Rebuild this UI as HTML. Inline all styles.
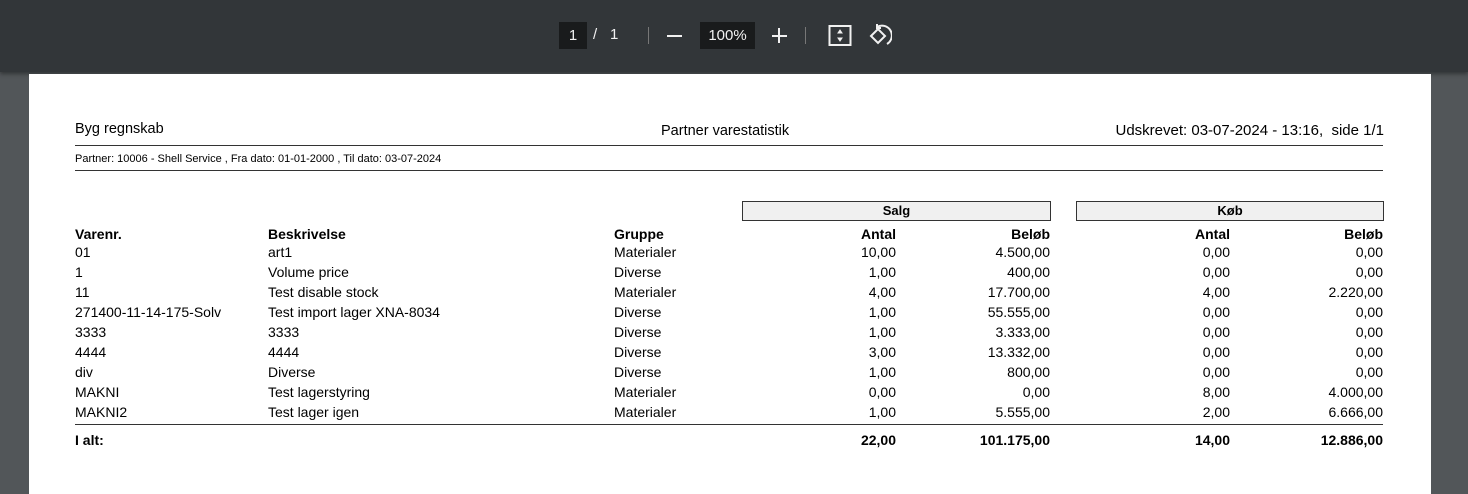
<!DOCTYPE html>
<html><head><meta charset="utf-8"><style>
*{margin:0;padding:0;box-sizing:border-box}
body{width:1468px;height:490px;overflow:hidden;background:#525659;font-family:"Liberation Sans",sans-serif;position:relative}
.tb{position:absolute;left:0;top:0;width:1468px;height:72px;background:#323639;box-shadow:0 2px 4px rgba(0,0,0,.4)}
.tb div,.tb span{position:absolute;color:#f1f1f1;font-size:15px}
.page{position:absolute;left:29px;top:74px;width:1402px;height:420px;background:#fff}
.t{position:absolute;font-size:14px;color:#000;white-space:nowrap;line-height:16px}
.r{text-align:right}
.b{font-weight:bold}
.ln{position:absolute;left:46px;width:1308px;height:1px;background:#333}
.box{position:absolute;top:127px;height:20px;border:1px solid #333;background:#f0f0f0;font-size:13px;font-weight:bold;text-align:center;line-height:18px}
</style></head><body>
<div class="tb">
<div style="left:559px;top:22px;width:28px;height:27px;background:#191b1c;text-align:center;line-height:27px">1</div>
<span style="left:593px;top:26px">/</span><span style="left:610px;top:26px">1</span>
<div style="left:648px;top:27px;width:1px;height:17px;background:#777"></div>
<div style="left:667px;top:35px;width:15px;height:2px;background:#f1f1f1"></div>
<div style="left:700px;top:22px;width:55px;height:27px;background:#191b1c;text-align:center;line-height:27px">100%</div>
<div style="left:772px;top:35px;width:15px;height:2px;background:#f1f1f1"></div>
<div style="left:778px;top:28px;width:2px;height:15px;background:#f1f1f1"></div>
<div style="left:805px;top:27px;width:1px;height:17px;background:#777"></div>
<svg style="position:absolute;left:828px;top:24px" width="24" height="24" viewBox="0 0 24 24" fill="none" stroke="#f1f1f1" stroke-width="2"><rect x="1.5" y="2" width="21" height="19"/><path d="M12 6l-2 3h4zM12 17l-2-3h4z" fill="#f1f1f1" stroke-width="1"/></svg>
<svg style="position:absolute;left:868px;top:23px" width="24" height="26" viewBox="0 0 24 26" fill="none" stroke="#f1f1f1" stroke-width="2"><path d="M3 13l7-7 7 7-7 7z"/><path d="M9 4a9 9 0 1 1 10 17"/><path d="M9 1v4h4"/></svg>
</div>
<div class="page">
<div class="t" style="left:46px;top:47px;font-size:14.5px">Byg regnskab</div>
<div class="t" style="left:632px;top:49px;font-size:14.5px">Partner varestatistik</div>
<div class="t r" style="right:47px;top:49px;font-size:15px">Udskrevet: 03-07-2024 - 13:16,&nbsp; side 1/1</div>
<div class="ln" style="top:71px"></div>
<div class="t" style="left:46px;top:77px;font-size:11px">Partner: 10006 - Shell Service , Fra dato: 01-01-2000 , Til dato: 03-07-2024</div>
<div class="ln" style="top:96px"></div>
<div class="box" style="left:713px;width:309px">Salg</div>
<div class="box" style="left:1047px;width:308px">Køb</div>
<div class="t b" style="left:46px;top:152px">Varenr.</div>
<div class="t b" style="left:239px;top:152px">Beskrivelse</div>
<div class="t b" style="left:585px;top:152px">Gruppe</div>
<div class="t b r" style="right:535px;top:152px">Antal</div>
<div class="t b r" style="right:381px;top:152px">Beløb</div>
<div class="t b r" style="right:201px;top:152px">Antal</div>
<div class="t b r" style="right:48px;top:152px">Beløb</div>
<div class="ln" style="top:350px"></div>
<div class="t b" style="left:46px;top:358px">I alt:</div>
<div class="t b r" style="right:535px;top:358px">22,00</div>
<div class="t b r" style="right:381px;top:358px">101.175,00</div>
<div class="t b r" style="right:201px;top:358px">14,00</div>
<div class="t b r" style="right:48px;top:358px">12.886,00</div>
<div class="t" style="left:46px;top:168px;line-height:20px">01<br>1<br>11<br>271400-11-14-175-Solv<br>3333<br>4444<br>div<br>MAKNI<br>MAKNI2</div>
<div class="t" style="left:239px;top:168px;line-height:20px">art1<br>Volume price<br>Test disable stock<br>Test import lager XNA-8034<br>3333<br>4444<br>Diverse<br>Test lagerstyring<br>Test lager igen</div>
<div class="t" style="left:585px;top:168px;line-height:20px">Materialer<br>Diverse<br>Materialer<br>Diverse<br>Diverse<br>Diverse<br>Diverse<br>Materialer<br>Materialer</div>
<div class="t r" style="right:535px;top:168px;line-height:20px">10,00<br>1,00<br>4,00<br>1,00<br>1,00<br>3,00<br>1,00<br>0,00<br>1,00</div>
<div class="t r" style="right:381px;top:168px;line-height:20px">4.500,00<br>400,00<br>17.700,00<br>55.555,00<br>3.333,00<br>13.332,00<br>800,00<br>0,00<br>5.555,00</div>
<div class="t r" style="right:201px;top:168px;line-height:20px">0,00<br>0,00<br>4,00<br>0,00<br>0,00<br>0,00<br>0,00<br>8,00<br>2,00</div>
<div class="t r" style="right:48px;top:168px;line-height:20px">0,00<br>0,00<br>2.220,00<br>0,00<br>0,00<br>0,00<br>0,00<br>4.000,00<br>6.666,00</div>
</div>
</body></html>
